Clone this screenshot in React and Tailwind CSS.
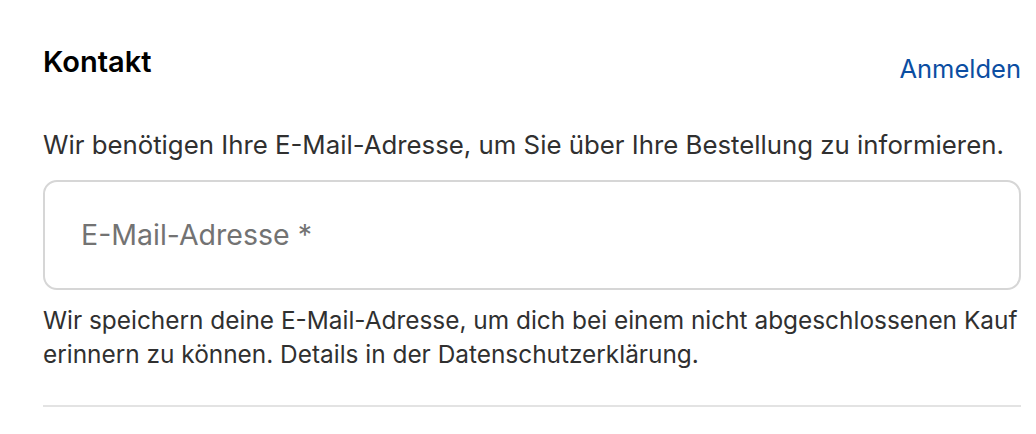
import React from "react";

export default function App() {
  return (
    <div className="w-[1036px] h-[434px] bg-white overflow-hidden" style={{ fontFamily: "Inter, 'Noto Sans', sans-serif" }}>
      <div className="ml-[43px] w-[978px] pt-[44px]">
        <div className="flex justify-between items-start h-[36px]">
          <h2 className="text-[29px] font-semibold text-black leading-[36px]">Kontakt</h2>
          <a className="mt-[7px] text-[25.5px] text-[#0b4ea2] leading-[36px]">Anmelden</a>
        </div>
        <p className="mt-[48px] text-[25.8px] text-[#303030] leading-[34px] whitespace-nowrap">
          Wir benötigen Ihre E-Mail-Adresse, um Sie über Ihre Bestellung zu informieren.
        </p>
        <div className="mt-[18px] h-[110px] rounded-[14px] border-2 border-[#d6d6d6] flex items-center pl-[36px]">
          <span className="text-[28.5px] text-[#737373]">E-Mail-Adresse *</span>
        </div>
        <p className="mt-[13px] text-[24.4px] text-[#303030] leading-[34px]">
          Wir speichern deine E-Mail-Adresse, um dich bei einem nicht abgeschlossenen Kauf erinnern zu können. Details in der Datenschutzerklärung.
        </p>
        <div className="mt-[34px] h-[2px] bg-[#e3e3e3]" />
      </div>
    </div>
  );
}
